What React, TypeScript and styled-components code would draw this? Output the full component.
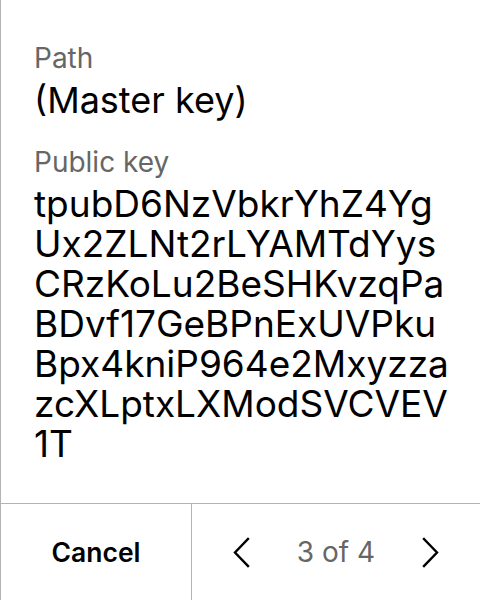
import styled, { createGlobalStyle } from 'styled-components';

const GlobalStyle = createGlobalStyle`
  html, body {
    margin: 0;
    padding: 0;
    background: #fff;
  }
  body {
    font-family: Inter, "Noto Sans", sans-serif;
    color: #000;
  }
`;

const Screen = styled.div`
  box-sizing: border-box;
  width: 480px;
  height: 600px;
  display: flex;
  flex-direction: column;
  border-left: 1px solid #b3b3b3;
`;

const Content = styled.div`
  flex: 1;
  padding: 42px 30px 0 33px;
  display: flex;
  flex-direction: column;
  gap: 24px;
`;

const Field = styled.div`
  display: flex;
  flex-direction: column;
`;

const Label = styled.div`
  font-size: 28px;
  line-height: 32px;
  color: #666;
`;

const Value = styled.div<{ $key?: boolean }>`
  font-size: ${(p) => (p.$key ? '37px' : '36px')};
  line-height: ${(p) => (p.$key ? '40px' : '44px')};
  margin-top: ${(p) => (p.$key ? '6px' : '4px')};
  color: #000;
  word-break: break-all;
`;

const Footer = styled.div`
  height: 96px;
  flex-shrink: 0;
  display: grid;
  grid-template-columns: 191px 1fr;
  border-top: 1px solid #b3b3b3;
`;

const CancelButton = styled.button`
  border: none;
  border-right: 1px solid #b3b3b3;
  background: none;
  font-family: Inter, "Noto Sans", sans-serif;
  font-size: 26.5px;
  font-weight: 600;
  color: #000;
  padding: 0;
`;

const Pager = styled.div`
  display: flex;
  align-items: center;
  justify-content: space-between;
  padding: 0 41px 0 41px;
`;

const ArrowButton = styled.button`
  border: none;
  background: none;
  padding: 0;
  display: flex;
  align-items: center;
`;

const PageText = styled.span`
  font-size: 28px;
  color: #666;
`;

function Chevron({ dir }: { dir: 'left' | 'right' }) {
  const points = dir === 'left' ? '15,2 2,15.5 15,29' : '2,2 15,15.5 2,29';
  return (
    <svg width="17" height="31" viewBox="0 0 17 31">
      <polyline points={points} fill="none" stroke="#000" strokeWidth="2.4" strokeLinecap="square" />
    </svg>
  );
}

const publicKey =
  'tpubD6NzVbkrYhZ4YgUx2ZLNt2rLYAMTdYysCRzKoLu2BeSHKvzqPaBDvf17GeBPnExUVPkuBpx4kniP964e2MxyzzazcXLptxLXModSVCVEV1T';

export default function App() {
  return (
    <>
      <GlobalStyle />
      <Screen>
        <Content>
          <Field>
            <Label>Path</Label>
            <Value>(Master key)</Value>
          </Field>
          <Field>
            <Label>Public key</Label>
            <Value $key>{publicKey}</Value>
          </Field>
        </Content>
        <Footer>
          <CancelButton>Cancel</CancelButton>
          <Pager>
            <ArrowButton>
              <Chevron dir="left" />
            </ArrowButton>
            <PageText>3 of 4</PageText>
            <ArrowButton>
              <Chevron dir="right" />
            </ArrowButton>
          </Pager>
        </Footer>
      </Screen>
    </>
  );
}
